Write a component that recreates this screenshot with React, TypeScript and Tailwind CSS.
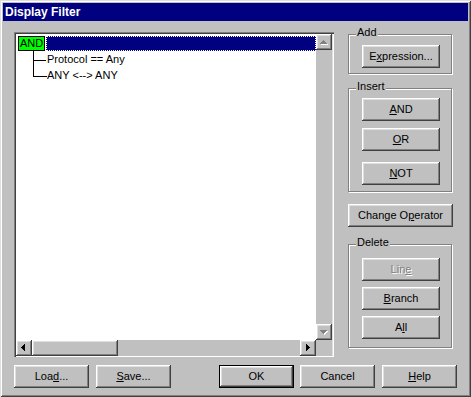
import React from "react";

const raised =
  "shadow-[inset_-1px_-1px_0_#404040,inset_1px_1px_0_#fff,inset_-2px_-2px_0_#808080,inset_2px_2px_0_#dfdfdf]";

function Arrow({ dir, disabled }: { dir: "up" | "down" | "left" | "right"; disabled?: boolean }) {
  const rects: { x: number; y: number; w: number; h: number }[] = [];
  for (let i = 0; i < 4; i++) {
    if (dir === "up") rects.push({ x: 7 - i, y: 6 + i, w: 1 + 2 * i, h: 1 });
    if (dir === "down") rects.push({ x: 4 + i, y: 6 + i, w: 7 - 2 * i, h: 1 });
    if (dir === "left") rects.push({ x: 5 + i, y: 7 - i, w: 1, h: 1 + 2 * i });
    if (dir === "right") rects.push({ x: 6 + i, y: 4 + i, w: 1, h: 7 - 2 * i });
  }
  return (
    <svg width="16" height="16" viewBox="0 0 16 16" shapeRendering="crispEdges">
      {disabled &&
        rects.map((r, i) => (
          <rect key={"s" + i} x={r.x + 1} y={r.y + 1} width={r.w} height={r.h} fill="#fff" />
        ))}
      {rects.map((r, i) => (
        <rect key={i} x={r.x} y={r.y} width={r.w} height={r.h} fill={disabled ? "#808080" : "#000"} />
      ))}
    </svg>
  );
}

function ScrollBtn({ dir, disabled }: { dir: "up" | "down" | "left" | "right"; disabled?: boolean }) {
  return (
    <div className={`w-[16px] h-[16px] shrink-0 bg-[#c0c0c0] ${raised}`}>
      <Arrow dir={dir} disabled={disabled} />
    </div>
  );
}

function Btn({
  children,
  w = "w-[78px]",
  def,
  disabled,
}: {
  children: React.ReactNode;
  w?: string;
  def?: boolean;
  disabled?: boolean;
}) {
  return (
    <div
      className={`${w} h-[23px] shrink-0 flex items-center justify-center bg-[#c0c0c0] ${
        def
          ? "shadow-[inset_0_0_0_1px_#000,inset_-2px_-2px_0_#404040,inset_2px_2px_0_#fff,inset_-3px_-3px_0_#808080,inset_3px_3px_0_#dfdfdf]"
          : raised
      } ${disabled ? "text-[#808080] [text-shadow:1px_1px_0_#fff]" : "text-black"}`}
    >
      <span className="leading-none">{children}</span>
    </div>
  );
}

function Group({ label, className, children }: { label: string; className: string; children: React.ReactNode }) {
  return (
    <div
      className={`relative w-[104px] border border-[#808080] shadow-[inset_1px_1px_0_#fff,1px_1px_0_#fff] pl-[13px] flex flex-col ${className}`}
    >
      <span className="absolute -top-[9px] left-[7px] px-[1px] bg-[#c0c0c0] leading-[13px]">{label}</span>
      {children}
    </div>
  );
}

export default function App() {
  return (
    <div className="w-[471px] h-[397px] bg-[#c0c0c0] pt-[3px] px-[3px] font-['Liberation_Sans',Arial,sans-serif] text-[11px] text-black shadow-[inset_1px_1px_0_#dfdfdf,inset_-1px_-1px_0_#404040,inset_2px_2px_0_#fff,inset_-2px_-2px_0_#808080]">
      <div className="h-[18px] bg-[#000080] text-white text-[12px] font-bold pl-[2px] flex items-center">Display Filter</div>

      <div className="flex mt-[11px] ml-[11px]">
        {/* tree list */}
        <div className="w-[320px] h-[325px] pt-[2px] pl-[2px] pr-[2px] pb-[1px] bg-white shadow-[inset_1px_1px_0_#808080,inset_2px_2px_0_#404040,inset_-1px_-1px_0_#fff,inset_-2px_-2px_0_#dfdfdf]">
          <div className="grid grid-cols-[300px_16px] grid-rows-[306px_16px] h-full">
            <div className="bg-white overflow-hidden pt-[2px] pl-[2px]">
              <div className="flex h-[15px]">
                <span className="w-[27px] bg-[#00ff00] border border-black flex items-center justify-center leading-none">
                  AND
                </span>
                <span className="ml-[1px] flex-1 bg-[#000080] border border-dotted border-white" />
              </div>
              <div className="ml-[15px]">
                <div className="flex h-[16px]">
                  <div className="w-[13px] h-full border-l border-black">
                    <div className="h-[10px] border-b border-black" />
                  </div>
                  <span className="ml-[1px] leading-[16px]">Protocol == Any</span>
                </div>
                <div className="flex h-[16px]">
                  <div className="w-[14px] h-[10px] border-l border-b border-black" />
                  <span className="leading-[16px]">ANY &lt;--&gt; ANY</span>
                </div>
              </div>
            </div>
            <div className="flex flex-col bg-[#c0c0c0]">
              <ScrollBtn dir="up" disabled />
              <div className="flex-1" />
              <ScrollBtn dir="down" disabled />
            </div>
            <div className="flex bg-[#c0c0c0]">
              <ScrollBtn dir="left" />
              <div className={`w-[86px] h-[16px] ${raised}`} />
              <div className="flex-1" />
              <ScrollBtn dir="right" />
            </div>
            <div className="bg-[#c0c0c0]" />
          </div>
        </div>

        {/* right column */}
        <div className="ml-[14px] w-[105px] flex flex-col">
          <Group label="Add" className="mt-[2px] pt-[10px] pb-[5px]">
            <Btn>
              E<u>x</u>pression...
            </Btn>
          </Group>
          <Group label="Insert" className="mt-[14px] pt-[9px] pb-[6px]">
            <Btn>
              <u>A</u>ND
            </Btn>
            <div className="mt-[7px]">
              <Btn>
                <u>O</u>R
              </Btn>
            </div>
            <div className="mt-[11px]">
              <Btn>
                <u>N</u>OT
              </Btn>
            </div>
          </Group>
          <div className="mt-[12px]">
            <Btn w="w-[105px]">
              Change O<u>p</u>erator
            </Btn>
          </div>
          <Group label="Delete" className="mt-[17px] pt-[13px] pb-[8px]">
            <Btn disabled>
              Lin<u>e</u>
            </Btn>
            <div className="mt-[6px]">
              <Btn>
                <u>B</u>ranch
              </Btn>
            </div>
            <div className="mt-[6px]">
              <Btn>
                A<u>l</u>l
              </Btn>
            </div>
          </Group>
        </div>
      </div>

      <div className="flex mt-[8px] ml-[11px]">
        <Btn w="w-[75px]">
          Loa<u>d</u>...
        </Btn>
        <div className="ml-[7px]">
          <Btn w="w-[75px]">
            <u>S</u>ave...
          </Btn>
        </div>
        <div className="ml-[48px]">
          <Btn w="w-[75px]" def>
            OK
          </Btn>
        </div>
        <div className="ml-[6px]">
          <Btn w="w-[75px]">Cancel</Btn>
        </div>
        <div className="ml-[7px]">
          <Btn w="w-[75px]">
            <u>H</u>elp
          </Btn>
        </div>
      </div>
    </div>
  );
}
